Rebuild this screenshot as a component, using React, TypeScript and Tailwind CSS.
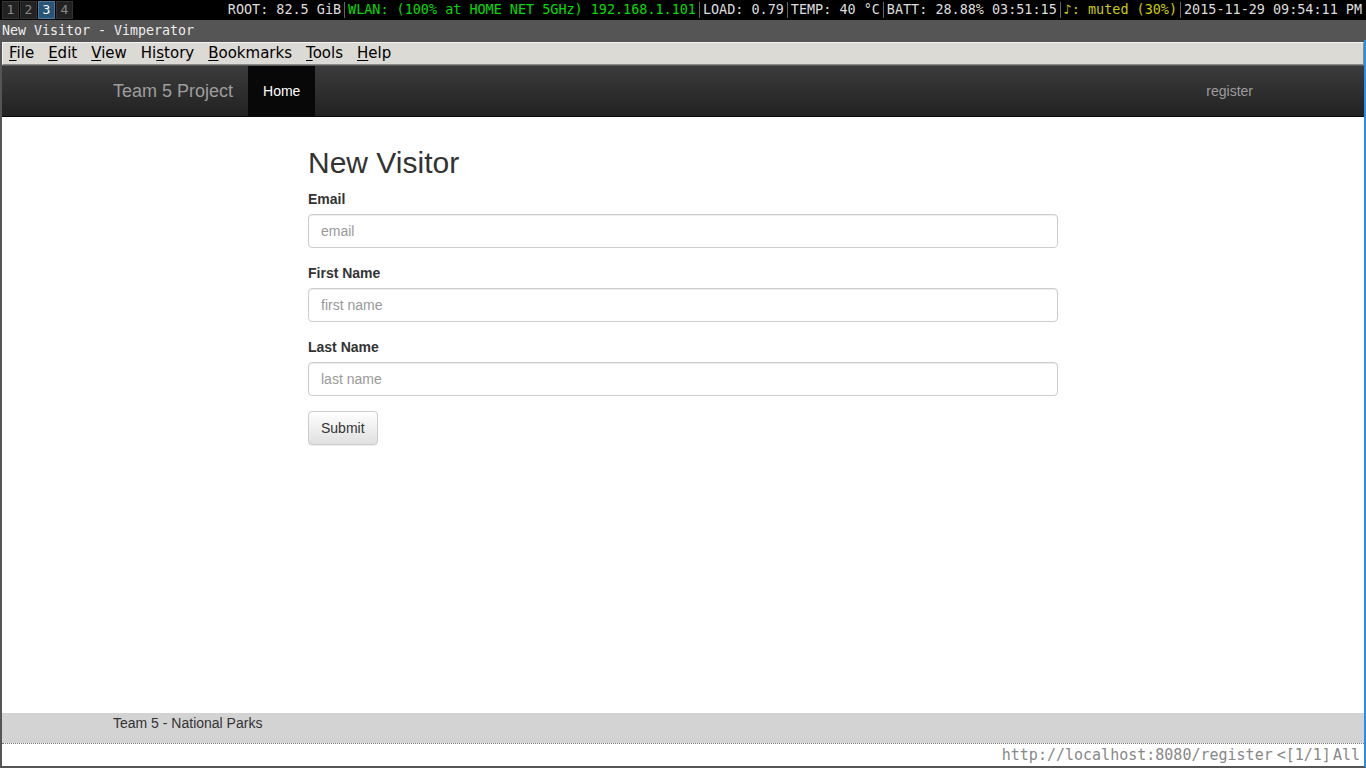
import React from 'react';

const mono = { fontFamily: '"DejaVu Sans Mono", monospace' };

function Sep() {
  return <span className="mx-[3px] inline-block h-[16px] w-px bg-[#666] align-middle" />;
}

function StatusBar() {
  const workspaces = ['1', '2', '3', '4'];
  return (
    <div className="flex h-[20px] items-center bg-black pl-[2px] pr-[4px] text-[13.45px] text-[#dddddd]" style={mono}>
      <div className="flex gap-px text-[13px]">
        {workspaces.map((w) => (
          <span
            key={w}
            className={`flex h-[18px] w-[17px] items-center justify-center border ${w === '3' ? 'border-[#4c7899] bg-[#285577] text-white' : 'border-[#333] bg-[#222] text-[#888]'}`}
          >
            {w}
          </span>
        ))}
      </div>
      <div className="ml-auto flex items-center whitespace-pre">
        <span>ROOT: 82.5 GiB</span>
        <Sep />
        <span className="text-[#00dd00]">WLAN: (100% at HOME NET 5GHz) 192.168.1.101</span>
        <Sep />
        <span>LOAD: 0.79</span>
        <Sep />
        <span>TEMP: 40 °C</span>
        <Sep />
        <span>BATT: 28.88% 03:51:15</span>
        <Sep />
        <span className="text-[#cccc00]">♪: muted (30%)</span>
        <Sep />
        <span>2015-11-29 09:54:11 PM</span>
      </div>
    </div>
  );
}

function MenuItem({ first, rest }: { first: string; rest: string }) {
  return (
    <span>
      <span className="underline underline-offset-2">{first}</span>
      {rest}
    </span>
  );
}

export default function App() {
  const menus = [
    ['F', 'ile'],
    ['E', 'dit'],
    ['V', 'iew'],
  ];
  return (
    <div className="flex h-[768px] w-[1366px] flex-col overflow-hidden bg-[#555]">
      <StatusBar />
      <div className="flex h-[20px] items-center bg-[#555] px-[2px] pt-[1px] text-[13.3px] text-[#eeeeee]" style={mono}>
        New Visitor - Vimperator
      </div>

      <div className="flex flex-1 flex-col border-b-2 border-l-2 border-r-2 border-b-[#555] border-l-[#555] border-r-[#2d8ee0] bg-white">
        {/* menubar */}
        <div className="border-b border-[#5a5a5a] bg-[#555] pt-[2px]">
          <div
            className="flex h-[23px] items-center gap-[14px] border border-[#f4f3f0] border-b-[#8a8a85] border-r-[#8a8a85] bg-[#dcdad5] pl-[6px] text-[15px] text-black"
            style={{ fontFamily: '"DejaVu Sans", sans-serif' }}
          >
            {menus.map(([a, b]) => (
              <MenuItem key={a + b} first={a} rest={b} />
            ))}
            <span>
              Hi<span className="underline underline-offset-2">s</span>tory
            </span>
            <MenuItem first="B" rest="ookmarks" />
            <MenuItem first="T" rest="ools" />
            <MenuItem first="H" rest="elp" />
          </div>
        </div>

        {/* navbar */}
        <div
          className="flex h-[51px] border-b border-[#080808] bg-gradient-to-b from-[#3c3c3c] to-[#222222]"
          style={{ fontFamily: '"Liberation Sans", Arial, sans-serif' }}
        >
          <div className="mx-auto flex w-[1170px] px-[15px]">
            <a className="flex items-center pr-[15px] text-[18px] text-[#9d9d9d]">Team 5 Project</a>
            <a className="flex items-center bg-[#080808] px-[15px] text-[14px] text-white">Home</a>
            <a className="-mr-[15px] ml-auto flex items-center px-[15px] text-[14px] text-[#9d9d9d]">register</a>
          </div>
        </div>

        {/* content */}
        <div className="flex-1" style={{ fontFamily: '"Liberation Sans", Arial, sans-serif' }}>
          <div className="mx-auto w-[750px] text-[14px] text-[#333]">
            <h1 className="mb-[10px] mt-[29px] text-[30px] leading-[33px] font-medium">New Visitor</h1>
            {[
              ['Email', 'email'],
              ['First Name', 'first name'],
              ['Last Name', 'last name'],
            ].map(([label, ph]) => (
              <div key={label} className="mb-[15px]">
                <label className="mb-[5px] block font-bold leading-[20px]">{label}</label>
                <input
                  className="block h-[34px] w-full rounded-[4px] border border-[#ccc] px-[12px] text-[14px] shadow-[inset_0_1px_1px_rgba(0,0,0,0.075)] outline-none placeholder:text-[#999]"
                  placeholder={ph}
                />
              </div>
            ))}
            <button className="h-[34px] rounded-[4px] border border-[#ccc] bg-gradient-to-b from-white to-[#e0e0e0] px-[12px] text-[14px] text-[#333] shadow-[0_1px_1px_rgba(0,0,0,0.075)]">
              Submit
            </button>
          </div>
        </div>

        {/* footer */}
        <div className="h-[30px] bg-[#d3d3d3]" style={{ fontFamily: '"Liberation Sans", Arial, sans-serif' }}>
          <div className="mx-auto w-[1170px] px-[15px] text-[14px] leading-[20px] text-[#333]">Team 5 - National Parks</div>
        </div>

        {/* vimperator status line */}
        <div className="flex h-[23px] items-center justify-end border-t border-dotted border-[#777] bg-white pr-[4px] text-[15px] text-[#888]" style={mono}>
          <span>http://localhost:8080/register</span>
          <span className="ml-[4px]">&lt;[1/1]</span>
          <span className="ml-[2px]">All</span>
        </div>
      </div>
    </div>
  );
}
